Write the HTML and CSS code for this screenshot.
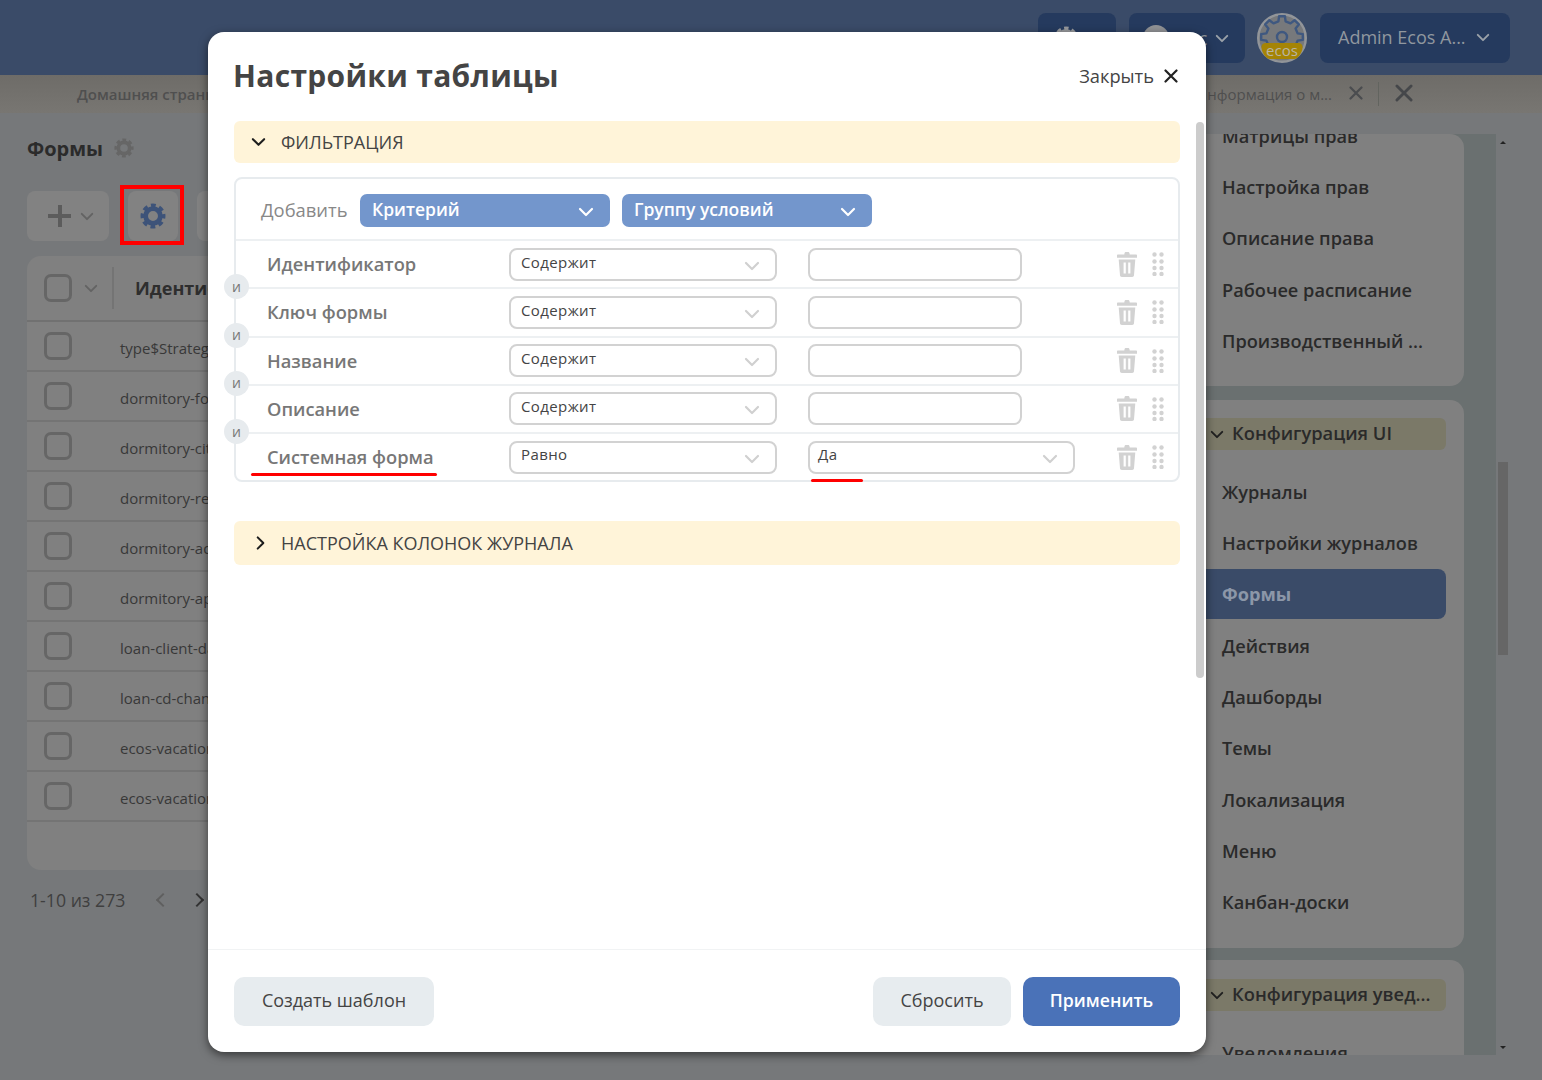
FILE: index.html
```html
<!DOCTYPE html>
<html lang="ru">
<head>
  <meta charset="UTF-8">
  <title>Настройки таблицы</title>
  <link rel="stylesheet" href="styles.css">
</head>
<body>
  <svg class="sprite" width="0" height="0">
    <symbol id="gear" viewBox="0 0 24 24">
      <circle cx="12" cy="12" r="6.800" fill="none" stroke="currentColor" stroke-width="4.400"/>
      <circle cx="12" cy="12" r="9.800" fill="none" stroke="currentColor" stroke-width="3.400" stroke-dasharray="4.400 3.300" stroke-dashoffset="2.200"/>
    </symbol>
    <symbol id="chev" viewBox="0 0 16 10">
      <path d="M2 2l6 6 6-6" fill="none" stroke="currentColor" stroke-width="2.200" stroke-linecap="round" stroke-linejoin="round"/>
    </symbol>
    <symbol id="cross" viewBox="0 0 14 14">
      <path d="M1.500 1.500l11 11M12.500 1.500l-11 11" fill="none" stroke="currentColor" stroke-width="2.200" stroke-linecap="round"/>
    </symbol>
    <symbol id="trash" viewBox="0 0 20 25">
      <path fill="currentColor" fill-rule="evenodd" d="M7.500 1.200C7.700.5 8.200 0 9 0h2c.8 0 1.300.5 1.500 1.200l.2 1.300h6.300c.6 0 1 .4 1 1v2.200H0V3.500c0-.6.4-1 1-1h6.300zM1.700 7.500h16.600l-1.300 15.800c-.1 1-.8 1.700-1.800 1.700H4.800c-1 0-1.700-.7-1.800-1.700zM6.600 10.500v11h2.200v-11zM11.200 10.500v11h2.200v-11z"/>
    </symbol>
    <symbol id="dots" viewBox="0 0 12 24">
      <g fill="currentColor">
        <circle cx="2.500" cy="2.500" r="2.200"/><circle cx="9.500" cy="2.500" r="2.200"/>
        <circle cx="2.500" cy="9.500" r="2.200"/><circle cx="9.500" cy="9.500" r="2.200"/>
        <circle cx="2.500" cy="16" r="2.200"/><circle cx="9.500" cy="16" r="2.200"/>
        <circle cx="2.500" cy="22" r="2.200"/><circle cx="9.500" cy="22" r="2.200"/>
      </g>
    </symbol>
  </svg>

  <div class="page">
    <!-- шапка -->
    <header class="topbar">
      <div class="top-btn top-btn-gear"><svg class="top-gear"><use href="#gear"/></svg></div>
      <div class="top-btn top-btn-lang"><span class="lang-dot"></span><span class="lang-text">Рус</span><svg class="chev-top"><use href="#chev"/></svg></div>
      <svg class="logo" viewBox="0 0 50 50">
        <circle cx="25" cy="25" r="23.800" fill="#77797c" stroke="#929599" stroke-width="2.400"/>
        <circle cx="25" cy="24" r="5" fill="none" stroke="#3f5880" stroke-width="2.400"/>
        <path d="M11.400 32.500L9.400 27.600 4.200 26.900 4.200 21.100 9.400 20.400 11.400 15.500 8.200 11.400 12.400 7.200 16.500 10.400 21.400 8.400 22.100 3.200 27.900 3.200 28.600 8.400 33.500 10.400 37.600 7.200 41.800 11.400 38.600 15.500 40.600 20.400 45.800 21.100 45.800 26.900 40.600 27.600 38.600 32.500" fill="none" stroke="#3f5880" stroke-width="2.400" stroke-linejoin="round"/>
        <path d="M9 30h32c3 0 5 2 4.500 5-.8 6-5 11-8.500 11H13c-3.500 0-7.700-5-8.500-11C4 32 6 30 9 30z" fill="#a58405"/>
        <text class="logo-text" x="25" y="42.500" text-anchor="middle">ecos</text>
      </svg>
      <div class="top-btn top-btn-user"><span>Admin Ecos A...</span><svg class="chev-top"><use href="#chev"/></svg></div>
    </header>

    <!-- вкладки -->
    <nav class="tabs">
      <span class="tab-home">Домашняя страница</span>
      <span class="tab-info">Информация о м...</span>
      <svg class="tab-close"><use href="#cross"/></svg>
      <span class="tab-sep"></span>
      <svg class="tab-close-all"><use href="#cross"/></svg>
    </nav>

    <main class="main">
      <section class="content">
        <div class="content-title"><h1>Формы</h1><svg class="title-gear"><use href="#gear"/></svg></div>
        <div class="toolbar">
          <div class="tool-btn tool-add"><span class="plus"></span><svg class="chev-tool"><use href="#chev"/></svg></div>
          <div class="tool-btn tool-gear"><svg class="gear-blue"><use href="#gear"/></svg></div>
          <div class="tool-btn tool-next"></div>
        </div>
        <div class="table-card">
          <div class="t-head"><span class="check"></span><svg class="chev-tool"><use href="#chev"/></svg><span class="t-sep"></span><b>Идентификатор</b></div>
          <div class="t-row"><span class="check"></span><span>type$Strategy-form</span></div>
          <div class="t-row"><span class="check"></span><span>dormitory-form</span></div>
          <div class="t-row"><span class="check"></span><span>dormitory-city</span></div>
          <div class="t-row"><span class="check"></span><span>dormitory-region</span></div>
          <div class="t-row"><span class="check"></span><span>dormitory-address</span></div>
          <div class="t-row"><span class="check"></span><span>dormitory-apartment</span></div>
          <div class="t-row"><span class="check"></span><span>loan-client-data</span></div>
          <div class="t-row"><span class="check"></span><span>loan-cd-change</span></div>
          <div class="t-row"><span class="check"></span><span>ecos-vacation</span></div>
          <div class="t-row"><span class="check"></span><span>ecos-vacation-2</span></div>
        </div>
        <div class="pager"><span>1-10 из 273</span><span class="pg-prev"></span><span class="pg-next"></span></div>
      </section>

      <aside class="side">
        <div class="side-scroll">
          <div class="side-card side-card-first">
            <div class="side-item">Матрицы прав</div>
            <div class="side-item">Настройка прав</div>
            <div class="side-item">Описание права</div>
            <div class="side-item">Рабочее расписание</div>
            <div class="side-item">Производственный ...</div>
          </div>
          <div class="side-card">
            <div class="side-group"><svg class="chev-group"><use href="#chev"/></svg>Конфигурация UI</div>
            <div class="side-item">Журналы</div>
            <div class="side-item">Настройки журналов</div>
            <div class="side-item side-active">Формы</div>
            <div class="side-item">Действия</div>
            <div class="side-item">Дашборды</div>
            <div class="side-item">Темы</div>
            <div class="side-item">Локализация</div>
            <div class="side-item">Меню</div>
            <div class="side-item">Канбан-доски</div>
          </div>
          <div class="side-card side-card-last">
            <div class="side-group"><svg class="chev-group"><use href="#chev"/></svg>Конфигурация увед...</div>
            <div class="side-item">Уведомления</div>
          </div>
        </div>
        <div class="side-bar">
          <span class="arrow-up"></span>
          <span class="side-thumb"></span>
          <span class="arrow-down"></span>
        </div>
      </aside>
    </main>
  </div>

  <!-- красная рамка поверх кнопки настроек -->
  <div class="mark-box"></div>

  <!-- модальное окно -->
  <div class="modal">
    <div class="modal-head">
      <h2>Настройки таблицы</h2>
      <div class="modal-close">Закрыть<svg class="close-x"><use href="#cross"/></svg></div>
    </div>

    <div class="modal-body">
      <div class="acc acc-open"><svg class="chev-acc"><use href="#chev"/></svg>ФИЛЬТРАЦИЯ</div>

      <div class="filter">
        <div class="add-row">
          <span class="add-label">Добавить</span>
          <div class="add-btn">Критерий<svg class="chev-add"><use href="#chev"/></svg></div>
          <div class="add-btn">Группу условий<svg class="chev-add"><use href="#chev"/></svg></div>
        </div>

        <div class="f-row">
          <span class="f-label">Идентификатор</span>
          <div class="sel">Содержит<svg class="chev-sel"><use href="#chev"/></svg></div>
          <div class="inp"></div>
          <svg class="trash"><use href="#trash"/></svg><svg class="dots"><use href="#dots"/></svg>
        </div>
        <div class="f-row">
          <span class="and">и</span>
          <span class="f-label">Ключ формы</span>
          <div class="sel">Содержит<svg class="chev-sel"><use href="#chev"/></svg></div>
          <div class="inp"></div>
          <svg class="trash"><use href="#trash"/></svg><svg class="dots"><use href="#dots"/></svg>
        </div>
        <div class="f-row">
          <span class="and">и</span>
          <span class="f-label">Название</span>
          <div class="sel">Содержит<svg class="chev-sel"><use href="#chev"/></svg></div>
          <div class="inp"></div>
          <svg class="trash"><use href="#trash"/></svg><svg class="dots"><use href="#dots"/></svg>
        </div>
        <div class="f-row">
          <span class="and">и</span>
          <span class="f-label">Описание</span>
          <div class="sel">Содержит<svg class="chev-sel"><use href="#chev"/></svg></div>
          <div class="inp"></div>
          <svg class="trash"><use href="#trash"/></svg><svg class="dots"><use href="#dots"/></svg>
        </div>
        <div class="f-row f-row-last">
          <span class="and">и</span>
          <span class="f-label">Системная форма</span>
          <span class="red-line red-label"></span>
          <div class="sel">Равно<svg class="chev-sel"><use href="#chev"/></svg></div>
          <div class="sel sel-value">Да<svg class="chev-sel"><use href="#chev"/></svg></div>
          <span class="red-line red-value"></span>
          <svg class="trash"><use href="#trash"/></svg><svg class="dots"><use href="#dots"/></svg>
        </div>
      </div>

      <div class="acc acc-closed"><svg class="chev-acc chev-right"><use href="#chev"/></svg>НАСТРОЙКА КОЛОНОК ЖУРНАЛА</div>
    </div>

    <div class="modal-foot">
      <div class="btn">Создать шаблон</div>
      <div class="foot-right">
        <div class="btn btn-reset">Сбросить</div>
        <div class="btn btn-apply">Применить</div>
      </div>
    </div>

    <span class="modal-thumb"></span>
  </div>
</body>
</html>
```

FILE: styles.css
```css
* { box-sizing: border-box; }
html, body { margin: 0; height: 100%; overflow: hidden; }
body { font-family: "Open Sans", "Noto Sans", sans-serif; background: #76787a; color: #444; }
svg { display: block; flex: none; }
.sprite { position: absolute; }

.page { height: 1080px; display: flex; flex-direction: column; }

/* шапка */
.topbar { height: 75px; flex: none; background: #3a4b68; display: flex; align-items: center; justify-content: flex-end; gap: 12px; padding: 0 32px 0 0; }
.top-btn { height: 50px; background: #253a5e; border-radius: 8px; display: flex; align-items: center; color: #90979f; font-size: 18px; font-weight: 500; }
.top-btn-gear { width: 78px; padding-left: 16px; margin-right: 1px; }
.top-gear { width: 24px; height: 24px; color: #97999c; }
.top-btn-lang { width: 116px; padding-left: 14px; }
.lang-dot { width: 26px; height: 26px; border-radius: 50%; background: #909295; margin-right: 10px; }
.lang-text { width: 36px; }
.top-btn-user { width: 190px; padding-left: 18px; padding-bottom: 2px; }
.chev-top { width: 14px; height: 9px; color: #9aa1a9; margin: 2px 0 0 10px; }
.lang-text + .chev-top { margin-left: 0; }
.logo { width: 50px; height: 50px; margin-right: 1px; }
.logo-text { font-family: "Open Sans", sans-serif; font-size: 15px; fill: #b9b5a4; }

/* вкладки */
.tabs { height: 38px; flex: none; background: linear-gradient(#6e6c68, #787672); display: flex; align-items: center; padding-left: 77px; font-size: 15px; font-weight: 500; color: #4f4f4f; }
.tab-home { flex: 1; font-weight: 600; }
.tab-info { width: 140px; white-space: nowrap; text-align: right; }
.tab-close { width: 14px; height: 14px; color: #4a4c4f; margin: 0 0 2px 17px; }
.tab-sep { width: 1px; height: 24px; background: #62645f; margin-left: 15px; }
.tab-close-all { width: 18px; height: 18px; color: #45474a; margin: 0 129px 2px 16px; }

.main { flex: 1; display: flex; justify-content: space-between; min-height: 0; }

/* левая часть */
.content { width: 214px; flex: none; padding: 21px 0 0 27px; }
.content-title { display: flex; align-items: center; height: 28px; }
.content-title h1 { margin: 0; font-size: 20px; font-weight: 700; color: #2b2b2b; }
.title-gear { width: 20px; height: 20px; color: #666; margin-left: 11px; }
.toolbar { display: flex; gap: 19px; margin-top: 29px; }
.tool-btn { height: 50px; flex: none; background: #828282; border-radius: 8px; display: flex; align-items: center; justify-content: center; }
.tool-add { width: 82px; gap: 9px; justify-content: flex-start; padding-left: 21px; }
.plus { width: 23px; height: 22px; background: linear-gradient(#5c5c5c, #5c5c5c) center / 100% 4px no-repeat, linear-gradient(#5c5c5c, #5c5c5c) center / 4px 100% no-repeat; }
.chev-tool { width: 14px; height: 9px; color: #636363; }
.tool-gear { width: 50px; }
.gear-blue { width: 26px; height: 26px; color: #3d5379; }
.tool-next { width: 50px; }
.table-card { margin-top: 15px; width: 300px; height: 614px; background: #808080; border-radius: 14px; }
.t-head { height: 66px; display: flex; align-items: center; padding-left: 17px; border-bottom: 2px solid #717171; font-size: 18px; color: #2e2e2e; white-space: nowrap; }
.t-head .chev-tool { margin-left: 12px; }
.t-sep { width: 2px; height: 42px; background: #747474; margin: 0 21px 0 14px; }
.t-row { height: 50px; display: flex; align-items: center; padding-left: 17px; border-bottom: 2px solid #747474; font-size: 15px; color: #383838; gap: 48px; white-space: nowrap; }
.t-row span:last-child { padding-top: 4px; }
.check { width: 28px; height: 28px; flex: none; border: 3px solid #666; border-radius: 7px; }
.pager { display: flex; align-items: center; margin: 18px 0 0 3px; font-size: 17.700px; color: #3f3f3f; height: 24px; white-space: nowrap; }
.pg-prev, .pg-next { width: 10px; height: 10px; flex: none; border-left: 2.500px solid #5f5f5f; border-bottom: 2.500px solid #5f5f5f; transform: rotate(45deg); margin-left: 33px; }
.pg-next { border-color: #333; transform: rotate(225deg); margin-left: 24px; }

/* боковое меню */
.side { width: 352px; flex: none; display: flex; align-items: flex-start; padding-top: 21px; }
.side-scroll { width: 306px; height: 921px; overflow: hidden; background: #6a7070; padding-right: 32px; }
.side-card { background: #808080; border-radius: 14px; margin-bottom: 12px; padding: 18px 18px 0 0; height: 548px; }
.side-card-first { height: 252px; padding-top: 0; margin-bottom: 14px; display: flow-root; }
.side-card-last { padding-top: 19px; }
.side-item { height: 51.200px; display: flex; align-items: center; padding-left: 32px; font-size: 18.200px; font-weight: 600; color: #2a2a2a; white-space: nowrap; }
.side-card-first .side-item { height: 51.300px; }
.side-card-first .side-item:first-child { margin-top: -24px; }
.side-group { height: 32px; background: #7b7968; border-radius: 6px; display: flex; align-items: center; padding: 0 0 3px 20px; margin-bottom: 16px; font-size: 18.300px; font-weight: 600; color: #2a2a2a; white-space: nowrap; }
.chev-group { width: 14px; height: 9px; color: #1f1f1f; margin: 3px 8px 0 0; }
.side-active { height: 50px; background: #3a4b68; border-radius: 0 8px 8px 0; color: #8c97a8; font-weight: 700; margin: 1px 0; }
.side-bar { position: relative; width: 14px; height: 921px; }
.arrow-up, .arrow-down { position: absolute; left: 4px; border: 3px solid transparent; }
.arrow-up { top: 4px; border-bottom: 3px solid #222; }
.arrow-down { bottom: 3px; border-top: 3px solid #222; }
.side-thumb { position: absolute; left: 2px; top: 328px; width: 10px; height: 193px; background: #666; }

/* красные пометки */
.mark-box { position: absolute; left: 120px; top: 185px; width: 64px; height: 60px; border: 4px solid #f00; }
.red-line { position: absolute; height: 2.500px; background: #f00; border-radius: 2px; }
.red-label { left: 15px; top: 39px; width: 186px; }
.red-value { left: 575px; top: 45px; width: 52px; }

/* модальное окно */
.modal { position: absolute; left: 208px; top: 32px; width: 998px; height: 1020px; background: #fff; border-radius: 16px; box-shadow: 0 3px 10px rgba(0, 0, 0, .55); display: flex; flex-direction: column; }
.modal-head { height: 89px; flex: none; padding: 0 28px 2px 25px; display: flex; align-items: center; justify-content: space-between; }
.modal-head h2 { margin: 0; font-size: 30px; font-weight: 700; color: #444; letter-spacing: .3px; }
.modal-close { display: flex; align-items: center; font-size: 18.300px; color: #444; }
.close-x { width: 14px; height: 14px; color: #222; margin-left: 10px; }
.modal-body { flex: 1; padding: 0 26px; }
.acc { background: #fff4d9; border-radius: 6px; display: flex; align-items: center; font-size: 18px; color: #444; }
.acc-open { height: 42px; padding-left: 17px; }
.acc-closed { height: 44px; margin-top: 39px; padding-left: 20px; }
.chev-acc { width: 15px; height: 10px; color: #1e1e1e; margin-right: 15px; }
.chev-right { transform: rotate(-90deg); margin-left: -1px; margin-right: 13px; }
.filter { margin-top: 14px; border: 2px solid #e7ebee; border-radius: 8px; height: 305px; }
.add-row { height: 60px; display: flex; align-items: flex-start; padding: 15px 0 0 25px; }
.add-label { width: 99px; font-size: 18.400px; line-height: 32px; color: #888; }
.add-btn { width: 250px; height: 33px; margin-right: 12px; background: #7396cc; border-radius: 7px; color: #fff; font-size: 17.500px; font-weight: 600; line-height: 1; display: flex; align-items: center; justify-content: space-between; padding: 0 16px 2px 12px; }
.chev-add { width: 16px; height: 10px; color: #fff; margin-top: 5px; }
.f-row { position: relative; height: 48.250px; border-top: 2px solid #edf0f2; display: flex; align-items: center; padding: 0 14px 0 31px; }
.f-label { width: 242px; padding-bottom: 1px; font-size: 18.300px; font-weight: 600; color: #777; white-space: nowrap; }
.sel, .inp { height: 33px; border: 2px solid #d2d2d2; border-radius: 8px; background: #fff; }
.sel { width: 268px; display: flex; align-items: center; justify-content: space-between; padding: 0 15px 5px 10px; font-size: 15px; color: #444; letter-spacing: .4px; }
.f-row-last .sel { padding-bottom: 7px; }
.chev-sel { width: 16px; height: 10px; color: #d0d0d0; margin-top: 8px; }
.f-row-last .chev-sel { margin-top: 10px; }
.inp { width: 214px; margin-left: 31px; }
.sel-value { width: 267px; margin-left: 31px; padding-left: 8px; }
.trash { width: 20px; height: 25px; color: #d2d2d2; margin-left: auto; }
.dots { width: 12px; height: 24px; color: #d2d2d2; margin-left: 15px; }
.and { position: absolute; left: -12px; top: -15px; width: 25px; height: 25px; padding-bottom: 1px; border-radius: 50%; background: #e7ebee; color: #777; font-size: 14px; display: flex; align-items: center; justify-content: center; }

.modal-foot { height: 103px; flex: none; border-top: 1px solid #f1f3f4; padding: 27px 26px 0; display: flex; justify-content: space-between; }
.foot-right { display: flex; gap: 12px; }
.btn { width: 200px; height: 49px; padding-bottom: 3px; background: #e7ecef; border-radius: 10px; display: flex; align-items: center; justify-content: center; font-size: 18px; color: #444; }
.btn-reset { width: 138px; }
.btn-apply { width: 157px; background: #4a72b8; color: #fff; font-size: 17.700px; font-weight: 600; }
.modal-thumb { position: absolute; left: 988px; top: 90px; width: 8px; height: 556px; background: #ccc; border-radius: 4px; }
```
